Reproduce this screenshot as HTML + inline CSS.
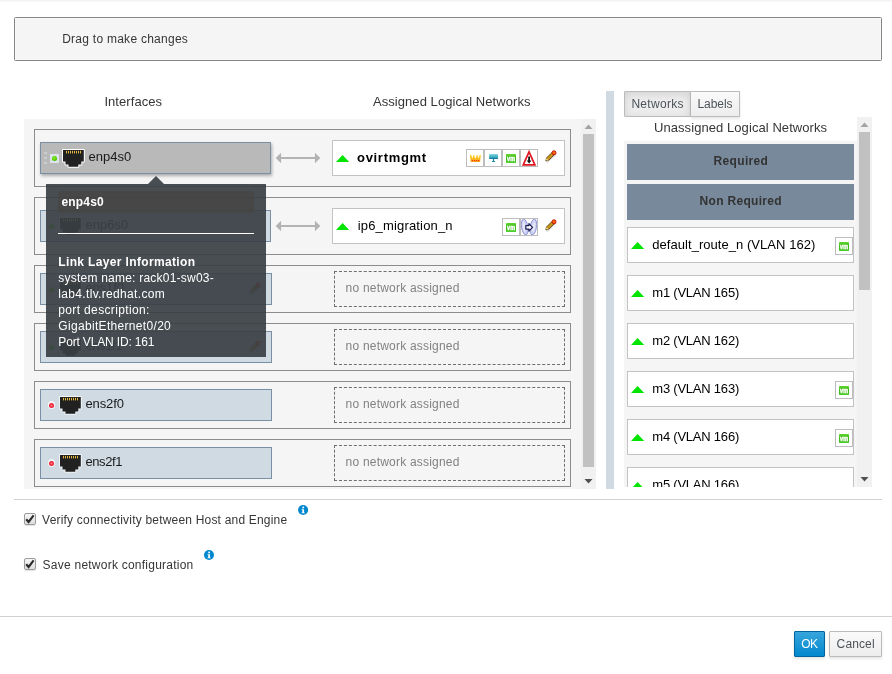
<!DOCTYPE html>
<html lang="en"><head><meta charset="utf-8"><title>Setup Host Networks</title>
<style>
html,body{margin:0;padding:0;background:#fff}
body{width:892px;height:674px;position:relative;overflow:hidden;font-family:"Liberation Sans",sans-serif}
.t{position:absolute;white-space:nowrap;line-height:16px}
#w{position:absolute;left:0;top:0;width:892px;height:674px;will-change:transform}
.row{position:absolute;left:34px;width:535px;border:1px solid #8c8c8c;background:#f5f5f5}
.nicbox{position:absolute;left:40px;height:30px;border:1px solid #7a8fa3;background:#cfdae2}
.nicbox.sel{background:#b9b9b9;box-shadow:1px 2px 3px rgba(0,0,0,.3)}
.net{position:absolute;height:34px;border:1px solid #c3c3c3;background:#fff}
.dash{position:absolute;left:334px;width:229px;height:34px;border:1px dashed #6e6e6e}
.ib{position:absolute;width:16px;height:16px;border:1px solid #bdbdbd;background:#fff}
.ib svg{display:block}
.nic{position:absolute}
.cb{position:absolute;left:24px;width:10px;height:10px;border:1px solid #9b9b9b;border-radius:2px;background:linear-gradient(#f6f6f6,#dedede);box-shadow:0 1px 1px rgba(0,0,0,.12)}
.cb svg{position:absolute;left:-1px;top:-1px}
</style></head>
<body>
<div id="w">
<div style="position:absolute;left:0;top:0;width:892px;height:2px;background:linear-gradient(#f4f4f4 0,#f4f4f4 50%,#f8f8f8 50%,#f8f8f8 100%)"></div>
<div style="position:absolute;left:14px;top:17px;width:866px;height:42px;border:1px solid #858585;border-radius:1.5px;background:#f5f5f5;box-shadow:inset 0 0 0 1px rgba(255,255,255,.4)"></div>
<span class="t" style="left:62.20px;top:30.84px;font-size:12px;color:#363636;letter-spacing:0.258px;">Drag to make changes</span>
<span class="t" style="left:104.40px;top:93.50px;font-size:13px;color:#363636;letter-spacing:0.067px;">Interfaces</span>
<span class="t" style="left:373.00px;top:93.50px;font-size:13px;color:#363636;letter-spacing:0.057px;">Assigned Logical Networks</span>
<div style="position:absolute;left:24px;top:119px;width:557px;height:370px;background:#f5f5f5"></div>
<div style="position:absolute;left:581px;top:119px;width:15px;height:370px;background:#f1f1f1"></div>
<div style="position:absolute;left:583px;top:134px;width:11px;height:333px;background:#c1c1c1"></div>
<svg style="position:absolute;left:581px;top:119px" width="15" height="15"><path d="M3.5 10 L7.5 5.5 L11.5 10Z" fill="#a3a3a3"/></svg>
<svg style="position:absolute;left:581px;top:474px" width="15" height="15"><path d="M3.5 5 L7.5 9.5 L11.5 5Z" fill="#505050"/></svg>
<div class="row" style="top:129px;height:56px"></div>
<div class="nicbox sel" style="top:142px;width:229px"></div>
<div style="position:absolute;left:44px;top:151.7px;width:2.7px;height:2.7px;background:#cdcdcd"></div>
<div style="position:absolute;left:44px;top:156.7px;width:2.7px;height:2.7px;background:#cdcdcd"></div>
<div style="position:absolute;left:44px;top:161.7px;width:2.7px;height:2.7px;background:#cdcdcd"></div>
<div style="position:absolute;left:50px;top:154px;width:9px;height:9px;background:#dbe4ea"></div>
<div style="position:absolute;left:51.8px;top:155.8px;width:5.4px;height:5.4px;border-radius:50%;background:radial-gradient(circle at 45% 40%,#8cf01e,#4fc400 60%,#43a800)"></div>
<svg style="position:absolute;left:61px;top:148px;overflow:visible" width="25" height="21"><g transform="translate(0.50,0.50)"><path d="M1.5 1.6 H22.3 V13.1 H19.8 V16.1 H16.8 V18.3 H7 V16.1 H4 V13.1 H1.5 Z" fill="#212121" stroke="#fff" stroke-width="2" stroke-linejoin="round" paint-order="stroke fill"/><g fill="#e6b73e"><rect x="4.5" y="2.4" width="1" height="2.5"/><rect x="6.5" y="2.4" width="1" height="2.5"/><rect x="8.5" y="2.4" width="1" height="2.5"/><rect x="10.5" y="2.4" width="1" height="2.5"/><rect x="12.5" y="2.4" width="1" height="2.5"/><rect x="14.5" y="2.4" width="1" height="2.5"/><rect x="16.5" y="2.4" width="1" height="2.5"/><rect x="18.5" y="2.4" width="1" height="2.5"/></g></g></svg>
<span class="t" style="left:88.40px;top:149.00px;font-size:13px;color:#1a1a1a;letter-spacing:0.052px;">enp4s0</span>
<svg style="position:absolute;left:275px;top:152px" width="46" height="12" viewBox="0 0 46 12"><path d="M0.7 6 L6.1 0.7 V5 H39.9 V0.7 L45.3 6 L39.9 11.3 V7 H6.1 V11.3 Z" fill="#b3b3b3"/></svg>
<div class="net" style="left:332px;top:140px;width:231px"></div>
<svg style="position:absolute;left:336px;top:155px" width="14" height="8"><path d="M0 7 L6.6 0 L13.2 7Z" fill="#00e400"/></svg>
<span class="t" style="left:357.00px;top:149.50px;font-size:13px;font-weight:bold;color:#000;letter-spacing:0.696px;">ovirtmgmt</span>
<div class="row" style="top:197px;height:56px"></div>
<div class="nicbox" style="top:210px;width:229px"></div>
<div style="position:absolute;left:49px;top:223.5px;width:5px;height:5px;border-radius:50%;background:#58c800"></div>
<svg style="position:absolute;left:58px;top:216px;overflow:visible" width="25" height="21"><g transform="translate(0.50,0.50)"><path d="M1.5 1.6 H22.3 V13.1 H19.8 V16.1 H16.8 V18.3 H7 V16.1 H4 V13.1 H1.5 Z" fill="#212121" stroke="#f0f4f7" stroke-width="2" stroke-linejoin="round" paint-order="stroke fill"/><g fill="#e6b73e"><rect x="4.5" y="2.4" width="1" height="2.5"/><rect x="6.5" y="2.4" width="1" height="2.5"/><rect x="8.5" y="2.4" width="1" height="2.5"/><rect x="10.5" y="2.4" width="1" height="2.5"/><rect x="12.5" y="2.4" width="1" height="2.5"/><rect x="14.5" y="2.4" width="1" height="2.5"/><rect x="16.5" y="2.4" width="1" height="2.5"/><rect x="18.5" y="2.4" width="1" height="2.5"/></g></g></svg>
<span class="t" style="left:85.40px;top:216.50px;font-size:13px;color:#1a1a1a;letter-spacing:0.052px;">enp6s0</span>
<svg style="position:absolute;left:275px;top:220px" width="46" height="12" viewBox="0 0 46 12"><path d="M0.7 6 L6.1 0.7 V5 H39.9 V0.7 L45.3 6 L39.9 11.3 V7 H6.1 V11.3 Z" fill="#b3b3b3"/></svg>
<div class="net" style="left:332px;top:208px;width:231px"></div>
<svg style="position:absolute;left:336px;top:223px" width="14" height="8"><path d="M0 7 L6.6 0 L13.2 7Z" fill="#00e400"/></svg>
<span class="t" style="left:357.70px;top:217.50px;font-size:13px;color:#000;letter-spacing:0.171px;">ip6_migration_n</span>
<div class="row" style="top:265px;height:46px"></div>
<div class="nicbox" style="top:273px;width:230px"></div>
<div style="position:absolute;left:49px;top:286.5px;width:5px;height:5px;border-radius:50%;background:#58c800"></div>
<svg style="position:absolute;left:58px;top:279px;overflow:visible" width="25" height="21"><g transform="translate(0.50,0.50)"><path d="M1.5 1.6 H22.3 V13.1 H19.8 V16.1 H16.8 V18.3 H7 V16.1 H4 V13.1 H1.5 Z" fill="#212121" stroke="#f0f4f7" stroke-width="2" stroke-linejoin="round" paint-order="stroke fill"/><g fill="#e6b73e"><rect x="4.5" y="2.4" width="1" height="2.5"/><rect x="6.5" y="2.4" width="1" height="2.5"/><rect x="8.5" y="2.4" width="1" height="2.5"/><rect x="10.5" y="2.4" width="1" height="2.5"/><rect x="12.5" y="2.4" width="1" height="2.5"/><rect x="14.5" y="2.4" width="1" height="2.5"/><rect x="16.5" y="2.4" width="1" height="2.5"/><rect x="18.5" y="2.4" width="1" height="2.5"/></g></g></svg>
<span class="t" style="left:85.40px;top:279.50px;font-size:13px;color:#1a1a1a;letter-spacing:-0.083px;">ens1f0</span>
<svg style="position:absolute;left:249px;top:281px;overflow:visible" width="14" height="14"><g transform="translate(0.10,0.70)"><path d="M2.2 12.2 L9.8 5.4" stroke="rgba(90,100,120,.25)" stroke-width="2.2" stroke-linecap="round"/><path d="M0.9 11.3 L1.5 8.5 L6.9 3.1 L9.1 5.3 L3.7 10.7 Z" fill="#c9981c" stroke="#5b3a08" stroke-width=".9" stroke-linejoin="round"/><path d="M0.9 11.3 L1.55 8.7 L3.5 10.65 Z" fill="#ffe9a0"/><path d="M0.7 11.5 L1.0 10.4 L1.8 11.2 Z" fill="#222"/><circle cx="9" cy="3.3" r="2" fill="#ff6a00" stroke="#c01414" stroke-width="1"/></g></svg>
<div class="dash" style="top:271px"></div>
<span class="t" style="left:345.60px;top:279.84px;font-size:12px;color:#828282;letter-spacing:0.207px;">no network assigned</span>
<div class="row" style="top:323px;height:46px"></div>
<div class="nicbox" style="top:331px;width:230px"></div>
<div style="position:absolute;left:49px;top:344.5px;width:5px;height:5px;border-radius:50%;background:#58c800"></div>
<svg style="position:absolute;left:58px;top:337px;overflow:visible" width="25" height="21"><g transform="translate(0.50,0.50)"><path d="M1.5 1.6 H22.3 V13.1 H19.8 V16.1 H16.8 V18.3 H7 V16.1 H4 V13.1 H1.5 Z" fill="#212121" stroke="#f0f4f7" stroke-width="2" stroke-linejoin="round" paint-order="stroke fill"/><g fill="#e6b73e"><rect x="4.5" y="2.4" width="1" height="2.5"/><rect x="6.5" y="2.4" width="1" height="2.5"/><rect x="8.5" y="2.4" width="1" height="2.5"/><rect x="10.5" y="2.4" width="1" height="2.5"/><rect x="12.5" y="2.4" width="1" height="2.5"/><rect x="14.5" y="2.4" width="1" height="2.5"/><rect x="16.5" y="2.4" width="1" height="2.5"/><rect x="18.5" y="2.4" width="1" height="2.5"/></g></g></svg>
<span class="t" style="left:85.40px;top:337.50px;font-size:13px;color:#1a1a1a;letter-spacing:-0.383px;">ens1f1</span>
<svg style="position:absolute;left:249px;top:339px;overflow:visible" width="14" height="14"><g transform="translate(0.10,0.70)"><path d="M2.2 12.2 L9.8 5.4" stroke="rgba(90,100,120,.25)" stroke-width="2.2" stroke-linecap="round"/><path d="M0.9 11.3 L1.5 8.5 L6.9 3.1 L9.1 5.3 L3.7 10.7 Z" fill="#c9981c" stroke="#5b3a08" stroke-width=".9" stroke-linejoin="round"/><path d="M0.9 11.3 L1.55 8.7 L3.5 10.65 Z" fill="#ffe9a0"/><path d="M0.7 11.5 L1.0 10.4 L1.8 11.2 Z" fill="#222"/><circle cx="9" cy="3.3" r="2" fill="#ff6a00" stroke="#c01414" stroke-width="1"/></g></svg>
<div class="dash" style="top:329px"></div>
<span class="t" style="left:345.60px;top:337.84px;font-size:12px;color:#828282;letter-spacing:0.207px;">no network assigned</span>
<div class="row" style="top:381px;height:46px"></div>
<div class="nicbox" style="top:389px;width:230px"></div>
<div style="position:absolute;left:47.7px;top:401.3px;width:7.8px;height:7.8px;border-radius:50%;background:#f3f5f7"></div>
<div style="position:absolute;left:49px;top:402.6px;width:5.2px;height:5.2px;border-radius:50%;background:radial-gradient(circle,#ff8088 0,#f0283c 45%,#e00f2a 100%)"></div>
<svg style="position:absolute;left:58px;top:395px;overflow:visible" width="25" height="21"><g transform="translate(0.50,0.50)"><path d="M1.5 1.6 H22.3 V13.1 H19.8 V16.1 H16.8 V18.3 H7 V16.1 H4 V13.1 H1.5 Z" fill="#212121" stroke="#f0f4f7" stroke-width="2" stroke-linejoin="round" paint-order="stroke fill"/><g fill="#e6b73e"><rect x="4.5" y="2.4" width="1" height="2.5"/><rect x="6.5" y="2.4" width="1" height="2.5"/><rect x="8.5" y="2.4" width="1" height="2.5"/><rect x="10.5" y="2.4" width="1" height="2.5"/><rect x="12.5" y="2.4" width="1" height="2.5"/><rect x="14.5" y="2.4" width="1" height="2.5"/><rect x="16.5" y="2.4" width="1" height="2.5"/><rect x="18.5" y="2.4" width="1" height="2.5"/></g></g></svg>
<span class="t" style="left:85.40px;top:395.50px;font-size:13px;color:#1a1a1a;letter-spacing:-0.083px;">ens2f0</span>
<div class="dash" style="top:387px"></div>
<span class="t" style="left:345.60px;top:395.84px;font-size:12px;color:#828282;letter-spacing:0.207px;">no network assigned</span>
<div class="row" style="top:439px;height:46px"></div>
<div class="nicbox" style="top:447px;width:230px"></div>
<div style="position:absolute;left:47.7px;top:459.3px;width:7.8px;height:7.8px;border-radius:50%;background:#f3f5f7"></div>
<div style="position:absolute;left:49px;top:460.6px;width:5.2px;height:5.2px;border-radius:50%;background:radial-gradient(circle,#ff8088 0,#f0283c 45%,#e00f2a 100%)"></div>
<svg style="position:absolute;left:58px;top:453px;overflow:visible" width="25" height="21"><g transform="translate(0.50,0.50)"><path d="M1.5 1.6 H22.3 V13.1 H19.8 V16.1 H16.8 V18.3 H7 V16.1 H4 V13.1 H1.5 Z" fill="#212121" stroke="#f0f4f7" stroke-width="2" stroke-linejoin="round" paint-order="stroke fill"/><g fill="#e6b73e"><rect x="4.5" y="2.4" width="1" height="2.5"/><rect x="6.5" y="2.4" width="1" height="2.5"/><rect x="8.5" y="2.4" width="1" height="2.5"/><rect x="10.5" y="2.4" width="1" height="2.5"/><rect x="12.5" y="2.4" width="1" height="2.5"/><rect x="14.5" y="2.4" width="1" height="2.5"/><rect x="16.5" y="2.4" width="1" height="2.5"/><rect x="18.5" y="2.4" width="1" height="2.5"/></g></g></svg>
<span class="t" style="left:85.40px;top:453.50px;font-size:13px;color:#1a1a1a;letter-spacing:-0.383px;">ens2f1</span>
<div class="dash" style="top:445px"></div>
<span class="t" style="left:345.60px;top:453.84px;font-size:12px;color:#828282;letter-spacing:0.207px;">no network assigned</span>
<div class="ib" style="left:466px;top:149px"><svg width="16" height="16" viewBox="0 0 16 16"><defs><linearGradient id="cg" x1="0" y1="0" x2="0" y2="1"><stop offset="0" stop-color="#ffd62e"/><stop offset="1" stop-color="#f6a21a"/></linearGradient></defs><path d="M2.9 4.9 L4.1 4.9 L5.7 8.6 L6.1 5 L7 5 L8.4 8.8 L9.8 5 L10.7 5 L11.1 8.6 L12.7 4.9 L13.9 4.9 L13.1 11.9 H3.7 Z" fill="url(#cg)"/><g fill="#ff2a12"><rect x="4.9" y="10" width="1.1" height="1.1"/><rect x="7" y="10" width="1.1" height="1.1"/><rect x="9.1" y="10" width="1.1" height="1.1"/><rect x="11.1" y="10" width="1.1" height="1.1"/></g></svg></div>
<div class="ib" style="left:484px;top:149px"><svg width="16" height="16" viewBox="0 0 16 16"><defs><linearGradient id="mg" x1="0" y1="0" x2="0" y2="1"><stop offset="0" stop-color="#86d6de"/><stop offset=".75" stop-color="#2a9fb6"/><stop offset=".8" stop-color="#1a7aa8"/><stop offset="1" stop-color="#1a7aa8"/></linearGradient></defs><rect x="4.1" y="4.1" width="8.9" height="4.9" rx=".4" fill="url(#mg)"/><rect x="7.9" y="9" width="1.2" height="2.3" fill="#1d8cad"/><rect x="6.9" y="11.1" width="3.3" height=".9" rx=".3" fill="#1d8cad"/></svg></div>
<div class="ib" style="left:502px;top:149px"><svg width="16" height="16" viewBox="0 0 16 16"><defs><linearGradient id="vg" x1="0" y1="0" x2="0" y2="1"><stop offset="0" stop-color="#62d630"/><stop offset=".5" stop-color="#38b414"/><stop offset="1" stop-color="#4ed22c"/></linearGradient></defs><rect x="3" y="4" width="10" height="9" rx=".6" fill="url(#vg)"/><text x="4.1" y="10.5" font-family="Liberation Sans, sans-serif" font-size="6.8" font-weight="bold" fill="#fff" stroke="#fff" stroke-width=".5" opacity=".99" textLength="7.9" lengthAdjust="spacingAndGlyphs">vm</text></svg></div>
<div class="ib" style="left:520px;top:149px"><svg width="18" height="18" viewBox="0 0 18 18" style="position:absolute;left:-1px;top:-1px"><path d="M9.05 2.8 L14.9 15.9 H3.2 Z" fill="#fff" stroke="#e01622" stroke-width="1.7" stroke-linejoin="miter"/><path d="M8.2 7.4 H10 V11.6 H11.5 L9.1 14.4 L6.7 11.6 H8.2 Z" fill="#111"/></svg></div>
<svg style="position:absolute;left:545px;top:149px;overflow:visible" width="14" height="14"><g transform="translate(0.00,0.50)"><path d="M2.2 12.2 L9.8 5.4" stroke="rgba(90,100,120,.25)" stroke-width="2.2" stroke-linecap="round"/><path d="M0.9 11.3 L1.5 8.5 L6.9 3.1 L9.1 5.3 L3.7 10.7 Z" fill="#c9981c" stroke="#5b3a08" stroke-width=".9" stroke-linejoin="round"/><path d="M0.9 11.3 L1.55 8.7 L3.5 10.65 Z" fill="#ffe9a0"/><path d="M0.7 11.5 L1.0 10.4 L1.8 11.2 Z" fill="#222"/><circle cx="9" cy="3.3" r="2" fill="#ff6a00" stroke="#c01414" stroke-width="1"/></g></svg>
<div class="ib" style="left:502px;top:218px"><svg width="16" height="16" viewBox="0 0 16 16"><defs><linearGradient id="vg" x1="0" y1="0" x2="0" y2="1"><stop offset="0" stop-color="#62d630"/><stop offset=".5" stop-color="#38b414"/><stop offset="1" stop-color="#4ed22c"/></linearGradient></defs><rect x="3" y="4" width="10" height="9" rx=".6" fill="url(#vg)"/><text x="4.1" y="10.5" font-family="Liberation Sans, sans-serif" font-size="6.8" font-weight="bold" fill="#fff" stroke="#fff" stroke-width=".5" opacity=".99" textLength="7.9" lengthAdjust="spacingAndGlyphs">vm</text></svg></div>
<div class="ib" style="left:520px;top:218px"><svg width="16" height="16" viewBox="0 0 16 16"><ellipse cx="3.7" cy="8" rx="3.2" ry="8" transform="rotate(-9 3.7 8)" fill="#cdd0f0" stroke="#8c92d4" stroke-width=".9"/><ellipse cx="12.3" cy="8" rx="3.2" ry="8" transform="rotate(9 12.3 8)" fill="#cdd0f0" stroke="#8c92d4" stroke-width=".9"/><ellipse cx="3.2" cy="8" rx="1.3" ry="5" transform="rotate(-9 3.2 8)" fill="#e6e8f8"/><ellipse cx="12.8" cy="8" rx="1.3" ry="5" transform="rotate(9 12.8 8)" fill="#e6e8f8"/><path d="M4.8 6.6 H7.9 V4.6 L11.5 8.35 L7.9 12.1 V10.1 H4.8 Z" fill="#fff" stroke="#1b1f55" stroke-width="1.25" stroke-linejoin="round"/></svg></div>
<svg style="position:absolute;left:545px;top:218px;overflow:visible" width="14" height="14"><g transform="translate(0.00,0.50)"><path d="M2.2 12.2 L9.8 5.4" stroke="rgba(90,100,120,.25)" stroke-width="2.2" stroke-linecap="round"/><path d="M0.9 11.3 L1.5 8.5 L6.9 3.1 L9.1 5.3 L3.7 10.7 Z" fill="#c9981c" stroke="#5b3a08" stroke-width=".9" stroke-linejoin="round"/><path d="M0.9 11.3 L1.55 8.7 L3.5 10.65 Z" fill="#ffe9a0"/><path d="M0.7 11.5 L1.0 10.4 L1.8 11.2 Z" fill="#222"/><circle cx="9" cy="3.3" r="2" fill="#ff6a00" stroke="#c01414" stroke-width="1"/></g></svg>
<div style="position:absolute;left:606px;top:91px;width:8px;height:398px;background:#cfdae2"></div>
<div style="position:absolute;left:624px;top:91px;width:65px;height:24px;border:1px solid #bbb;border-radius:1px 0 0 1px;background:#ededed;box-shadow:inset 0 2px 8px rgba(3,3,3,.12)"></div>
<div style="position:absolute;left:691px;top:91px;width:48px;height:24px;border:1px solid #bbb;border-left:none;border-radius:0 1px 1px 0;background:linear-gradient(#fafafa,#ededed);box-shadow:0 2px 3px rgba(3,3,3,.1)"></div>
<span class="t" style="left:631.40px;top:95.84px;font-size:12px;color:#4d5258;letter-spacing:0.298px;">Networks</span>
<span class="t" style="left:697.50px;top:95.84px;font-size:12px;color:#4d5258;letter-spacing:-0.052px;">Labels</span>
<span class="t" style="left:654.00px;top:119.50px;font-size:13px;color:#363636;letter-spacing:0.069px;">Unassigned Logical Networks</span>
<div style="position:absolute;left:624px;top:141px;width:233px;height:346px;background:#f5f5f5"></div>
<div style="position:absolute;left:857px;top:117px;width:15px;height:370px;background:#f1f1f1"></div>
<div style="position:absolute;left:859px;top:132px;width:11px;height:158px;background:#c1c1c1"></div>
<svg style="position:absolute;left:857px;top:117px" width="15" height="15"><path d="M3.5 10 L7.5 5.5 L11.5 10Z" fill="#a3a3a3"/></svg>
<svg style="position:absolute;left:857px;top:472px" width="15" height="15"><path d="M3.5 5 L7.5 9.5 L11.5 5Z" fill="#505050"/></svg>
<div style="position:absolute;left:627px;top:144px;width:227px;height:36px;background:#78899b"></div>
<div style="position:absolute;left:627px;top:184px;width:227px;height:36px;background:#78899b"></div>
<span class="t" style="left:713.60px;top:152.84px;font-size:12px;font-weight:bold;color:#333;letter-spacing:0.333px;">Required</span>
<span class="t" style="left:699.50px;top:192.84px;font-size:12px;font-weight:bold;color:#333;letter-spacing:0.316px;">Non Required</span>
<div style="position:absolute;left:624px;top:141px;width:233px;height:346px;overflow:hidden">
<div class="net" style="left:3px;top:86px;width:225px"></div>
<svg style="position:absolute;left:7px;top:101px" width="14" height="8"><path d="M0 7 L6.6 0 L13.2 7Z" fill="#00e400"/></svg>
<span class="t" style="left:28.30px;top:95.50px;font-size:13px;color:#000;letter-spacing:0.044px;">default_route_n (VLAN 162)</span>
<div class="ib" style="left:211px;top:96px"><svg width="16" height="16" viewBox="0 0 16 16"><defs><linearGradient id="vg" x1="0" y1="0" x2="0" y2="1"><stop offset="0" stop-color="#62d630"/><stop offset=".5" stop-color="#38b414"/><stop offset="1" stop-color="#4ed22c"/></linearGradient></defs><rect x="3" y="4" width="10" height="9" rx=".6" fill="url(#vg)"/><text x="4.1" y="10.5" font-family="Liberation Sans, sans-serif" font-size="6.8" font-weight="bold" fill="#fff" stroke="#fff" stroke-width=".5" opacity=".99" textLength="7.9" lengthAdjust="spacingAndGlyphs">vm</text></svg></div>
<div class="net" style="left:3px;top:134px;width:225px"></div>
<svg style="position:absolute;left:7px;top:149px" width="14" height="8"><path d="M0 7 L6.6 0 L13.2 7Z" fill="#00e400"/></svg>
<span class="t" style="left:28.30px;top:143.50px;font-size:13px;color:#000;letter-spacing:-0.223px;">m1 (VLAN 165)</span>
<div class="net" style="left:3px;top:182px;width:225px"></div>
<svg style="position:absolute;left:7px;top:197px" width="14" height="8"><path d="M0 7 L6.6 0 L13.2 7Z" fill="#00e400"/></svg>
<span class="t" style="left:28.30px;top:191.50px;font-size:13px;color:#000;letter-spacing:-0.223px;">m2 (VLAN 162)</span>
<div class="net" style="left:3px;top:230px;width:225px"></div>
<svg style="position:absolute;left:7px;top:245px" width="14" height="8"><path d="M0 7 L6.6 0 L13.2 7Z" fill="#00e400"/></svg>
<span class="t" style="left:28.30px;top:239.50px;font-size:13px;color:#000;letter-spacing:-0.223px;">m3 (VLAN 163)</span>
<div class="ib" style="left:211px;top:240px"><svg width="16" height="16" viewBox="0 0 16 16"><defs><linearGradient id="vg" x1="0" y1="0" x2="0" y2="1"><stop offset="0" stop-color="#62d630"/><stop offset=".5" stop-color="#38b414"/><stop offset="1" stop-color="#4ed22c"/></linearGradient></defs><rect x="3" y="4" width="10" height="9" rx=".6" fill="url(#vg)"/><text x="4.1" y="10.5" font-family="Liberation Sans, sans-serif" font-size="6.8" font-weight="bold" fill="#fff" stroke="#fff" stroke-width=".5" opacity=".99" textLength="7.9" lengthAdjust="spacingAndGlyphs">vm</text></svg></div>
<div class="net" style="left:3px;top:278px;width:225px"></div>
<svg style="position:absolute;left:7px;top:293px" width="14" height="8"><path d="M0 7 L6.6 0 L13.2 7Z" fill="#00e400"/></svg>
<span class="t" style="left:28.30px;top:287.50px;font-size:13px;color:#000;letter-spacing:-0.223px;">m4 (VLAN 166)</span>
<div class="ib" style="left:211px;top:288px"><svg width="16" height="16" viewBox="0 0 16 16"><defs><linearGradient id="vg" x1="0" y1="0" x2="0" y2="1"><stop offset="0" stop-color="#62d630"/><stop offset=".5" stop-color="#38b414"/><stop offset="1" stop-color="#4ed22c"/></linearGradient></defs><rect x="3" y="4" width="10" height="9" rx=".6" fill="url(#vg)"/><text x="4.1" y="10.5" font-family="Liberation Sans, sans-serif" font-size="6.8" font-weight="bold" fill="#fff" stroke="#fff" stroke-width=".5" opacity=".99" textLength="7.9" lengthAdjust="spacingAndGlyphs">vm</text></svg></div>
<div class="net" style="left:3px;top:326px;width:225px"></div>
<svg style="position:absolute;left:7px;top:341px" width="14" height="8"><path d="M0 7 L6.6 0 L13.2 7Z" fill="#00e400"/></svg>
<span class="t" style="left:28.30px;top:335.50px;font-size:13px;color:#000;letter-spacing:-0.223px;">m5 (VLAN 166)</span>
</div>
<div style="position:absolute;left:14px;top:499px;width:868px;height:1px;background:#d1d1d1"></div>
<div style="position:absolute;left:0;top:616px;width:892px;height:1px;background:#d1d1d1"></div>
<div class="cb" style="top:513px"><svg width="12" height="12" viewBox="0 0 12 12"><path d="M2.2 6.2 L4.6 9 L9.6 2.4" fill="none" stroke="#2b2b2b" stroke-width="2.1"/></svg></div>
<div class="cb" style="top:558px"><svg width="12" height="12" viewBox="0 0 12 12"><path d="M2.2 6.2 L4.6 9 L9.6 2.4" fill="none" stroke="#2b2b2b" stroke-width="2.1"/></svg></div>
<span class="t" style="left:42.10px;top:511.84px;font-size:12px;color:#363636;letter-spacing:0.196px;">Verify connectivity between Host and Engine</span>
<span class="t" style="left:42.60px;top:556.84px;font-size:12px;color:#363636;letter-spacing:0.238px;">Save network configuration</span>
<svg style="position:absolute;left:297px;top:504px;overflow:visible" width="12" height="12"><g transform="translate(0.80,0.70) scale(0.9636)"><circle cx="5.5" cy="5.5" r="5.2" fill="#0088ce"/><rect x="4.7" y="2" width="1.8" height="1.7" fill="#fff"/><path d="M3.9 4.6 H6.5 V8 H7.2 V9 H3.9 V8 H4.7 V5.6 H3.9 Z" fill="#fff"/></g></svg>
<svg style="position:absolute;left:203px;top:549px;overflow:visible" width="12" height="12"><g transform="translate(0.70,0.70) scale(0.9636)"><circle cx="5.5" cy="5.5" r="5.2" fill="#0088ce"/><rect x="4.7" y="2" width="1.8" height="1.7" fill="#fff"/><path d="M3.9 4.6 H6.5 V8 H7.2 V9 H3.9 V8 H4.7 V5.6 H3.9 Z" fill="#fff"/></g></svg>
<div style="position:absolute;left:794px;top:631px;width:29px;height:24px;border:1px solid #00659c;border-radius:1px;background:linear-gradient(#39a5dc,#0088ce);box-shadow:0 2px 3px rgba(3,3,3,.1)"></div>
<span class="t" style="left:801.30px;top:635.84px;font-size:12px;color:#fff;letter-spacing:-0.528px;">OK</span>
<div style="position:absolute;left:829px;top:631px;width:51px;height:24px;border:1px solid #bbb;border-radius:1px;background:linear-gradient(#fafafa,#ededed);box-shadow:0 2px 3px rgba(3,3,3,.1)"></div>
<span class="t" style="left:836.60px;top:635.84px;font-size:12px;color:#4d5258;letter-spacing:0.122px;">Cancel</span>
<div style="position:absolute;left:46px;top:184px;width:220px;height:173px;background:rgba(57,63,68,.92)"></div>
<svg style="position:absolute;left:148px;top:176px" width="16" height="8"><path d="M0 8 L8 0 L16 8Z" fill="rgba(57,63,68,.92)"/></svg>
<div style="position:absolute;left:58px;top:191px;width:196px;height:22px;background:rgba(70,68,66,.7)"></div>
<span class="t" style="left:61.40px;top:193.84px;font-size:12px;font-weight:bold;color:#fff;letter-spacing:0.186px;">enp4s0</span>
<div style="position:absolute;left:58px;top:233px;width:196px;height:1px;background:#fff"></div>
<span class="t" style="left:58.30px;top:253.84px;font-size:12px;font-weight:bold;color:#fff;letter-spacing:0.353px;">Link Layer Information</span>
<span class="t" style="left:58.30px;top:269.84px;font-size:12px;color:#fff;letter-spacing:0.224px;">system name: rack01-sw03-</span>
<span class="t" style="left:58.30px;top:285.84px;font-size:12px;color:#fff;letter-spacing:0.330px;">lab4.tlv.redhat.com</span>
<span class="t" style="left:58.30px;top:301.84px;font-size:12px;color:#fff;letter-spacing:0.354px;">port description:</span>
<span class="t" style="left:58.30px;top:317.84px;font-size:12px;color:#fff;letter-spacing:0.320px;">GigabitEthernet0/20</span>
<span class="t" style="left:58.30px;top:333.84px;font-size:12px;color:#fff;letter-spacing:-0.156px;">Port VLAN ID: 161</span>
</div>
</body></html>
